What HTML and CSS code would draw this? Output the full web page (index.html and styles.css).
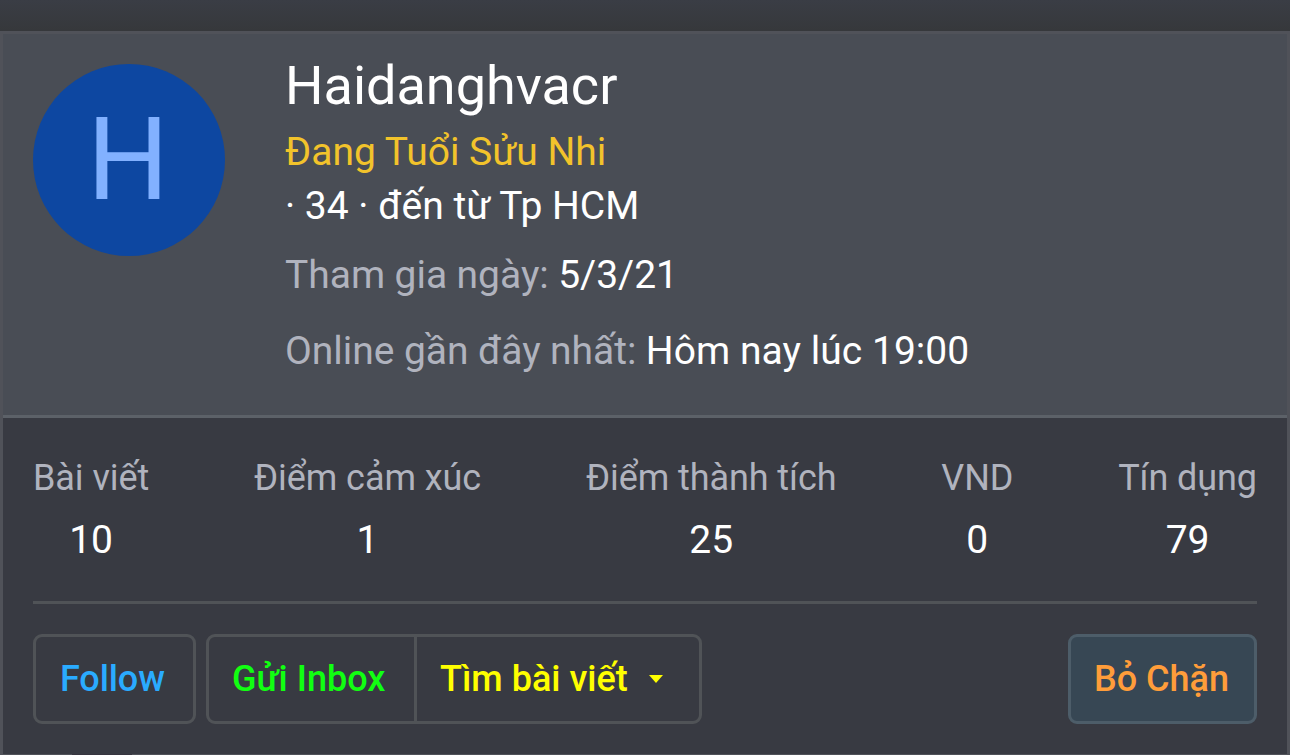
FILE: index.html
```html
<!DOCTYPE html>
<html lang="vi">
<head>
<meta charset="utf-8">
<title>Haidanghvacr</title>
<link rel="stylesheet" href="styles.css">
</head>
<body>
<article class="card">
  <header class="profile">
    <div class="avatar"><span>H</span></div>
    <div class="info">
      <h1 class="name">Haidanghvacr</h1>
      <div class="title">Đang Tuổi Sửu Nhi</div>
      <div class="blurb">· 34 · đến từ Tp HCM</div>
      <div class="meta joined"><span class="label">Tham gia ngày:</span> <span>5/3/21</span></div>
      <div class="meta seen"><span class="label">Online gần đây nhất:</span> <span class="seen-date">Hôm nay lúc 19:00</span></div>
    </div>
  </header>
  <section class="body">
    <div class="stats">
      <dl><dt>Bài viết</dt><dd>10</dd></dl>
      <dl><dt>Điểm cảm xúc</dt><dd>1</dd></dl>
      <dl><dt>Điểm thành tích</dt><dd>25</dd></dl>
      <dl><dt>VND</dt><dd>0</dd></dl>
      <dl><dt>Tín dụng</dt><dd>79</dd></dl>
    </div>
    <div class="actions">
      <a class="btn follow">Follow</a>
      <div class="group">
        <a class="inbox">Gửi Inbox</a>
        <a class="find"><span>Tìm bài viết</span><svg width="14" height="8" viewBox="0 0 14 8"><path d="M0 0h14L7 8z" fill="currentColor"/></svg></a>
      </div>
      <a class="btn block">Bỏ Chặn</a>
    </div>
  </section>
  <div class="tabs"><span class="tab-edge"></span></div>
</article>
</body>
</html>
```
FILE: styles.css
```css
* { box-sizing: border-box; }
html, body { height: 100%; }
body { margin: 0; padding-top: 31px; overflow: hidden; background: #383a42 linear-gradient(#3a3d45, #36383b) 0 0 / 100% 31px no-repeat; color: #fff; font-family: Roboto, "Noto Sans", sans-serif; }
.card { height: 724px; border: 3px solid #505259; border-bottom: 0; background: #383a42; }
.profile { display: flex; height: 384px; padding: 30px; background: #494d55; border-bottom: 3px solid #5c6168; }
.avatar { width: 192px; height: 192px; padding-right: 2px; border-radius: 50%; background: #0d47a1; color: #82b1ff; font-size: 115px; line-height: 192px; text-align: center; }
.info { margin-left: 60px; white-space: nowrap; }
.name { margin: -10px 0 0; font-size: 54px; line-height: 64px; font-weight: 400; }
.title { margin-top: 7px; font-size: 39px; line-height: 54px; color: #f2c32b; }
.blurb { font-size: 39px; line-height: 54px; }
.meta { font-size: 39px; line-height: 54px; word-spacing: -0.3px; }
.joined { margin-top: 15px; }
.seen { margin-top: 22px; }
.seen-date { word-spacing: 0.2px; }
.label { color: #b0b3be; }
.body { height: 336px; padding: 0 30px; }
.stats { display: flex; justify-content: space-between; height: 186px; padding-top: 33px; border-bottom: 3px solid #505357; text-align: center; }
.stats dl { margin: 0; }
.stats dt { color: #b0b3be; font-size: 36px; line-height: 54px; letter-spacing: -0.08px; }
.stats dd { margin: 8px 0 0; font-size: 39px; line-height: 54px; }
.actions { display: flex; height: 90px; margin-top: 30px; font-size: 36px; font-weight: 500; line-height: 84px; white-space: nowrap; }
.btn, .group { border: 3px solid #505357; border-radius: 9px; }
.follow { width: 163px; padding-left: 24px; color: #2aabff; letter-spacing: -0.1px; }
.group { display: flex; width: 496px; margin-left: 10px; }
.inbox { width: 208px; padding-left: 23px; border-right: 3px solid #505357; color: #1f1; }
.find { display: flex; align-items: center; padding-left: 23px; color: #ff0; }
.find svg { margin-left: 21px; }
.block { width: 189px; margin-left: auto; padding-left: 23px; background: #374754; border-color: #4d5d69; color: #ff9d3a; }
.tabs { height: 1px; padding-left: 69px; background: #505259; }
.tab-edge { display: block; width: 60px; height: 1px; background: #37353f; }
```
